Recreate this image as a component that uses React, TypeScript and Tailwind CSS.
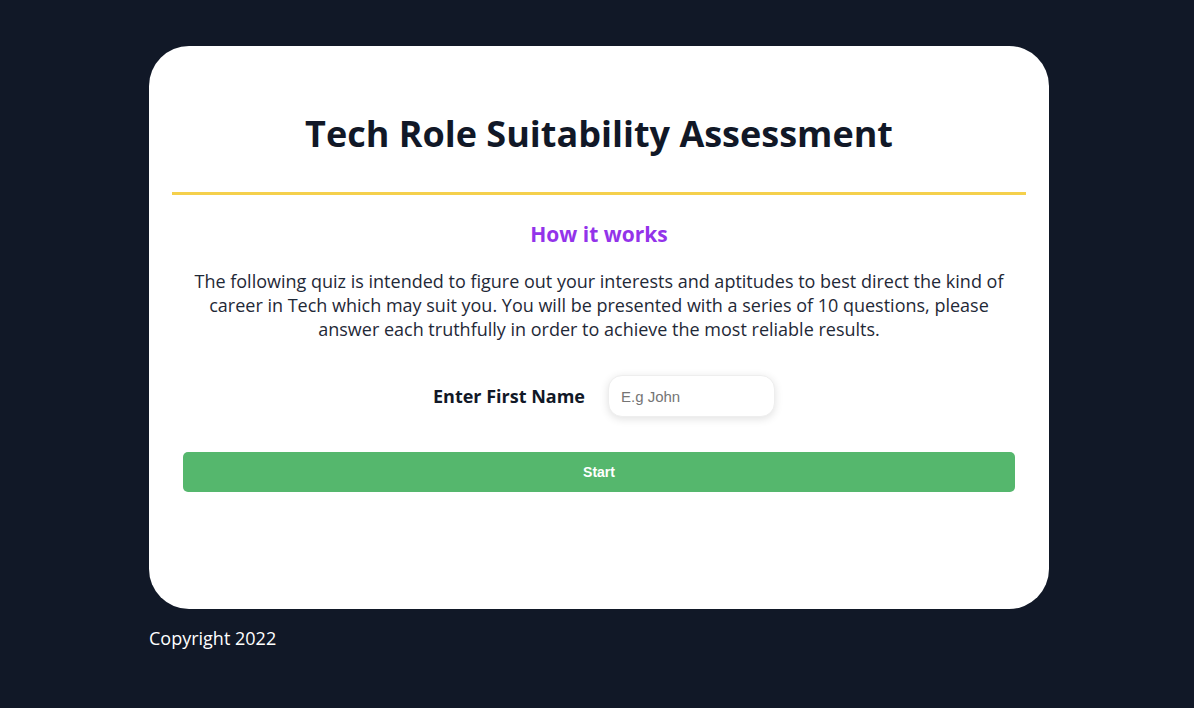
export default function App() {
  return (
    <div className="min-h-[708px] bg-[#111827] font-['Open_Sans',sans-serif]">
      <div className="ml-[149px] w-[900px] pt-[46px]">
        <div className="rounded-[40px] bg-white px-[23px] pt-[68px] pb-[117px]">
          <h1 className="text-center text-[36px] font-bold leading-[40px] text-[#111827]">
            Tech Role Suitability Assessment
          </h1>
          <hr className="mt-[38px] border-0 border-t-[3px] border-[#f5d04c]" />
          <h2 className="mt-[25px] text-center text-[21px] font-bold leading-[28px] text-[#9333ea]">
            How it works
          </h2>
          <p className="mt-[21px] px-[10px] text-center text-[18px] leading-[24px] text-[#1f2937]">
            The following quiz is intended to figure out your interests and aptitudes to best direct the kind of
            career in Tech which may suit you. You will be presented with a series of 10 questions, please
            answer each truthfully in order to achieve the most reliable results.
          </p>
          <div className="mt-[34px] flex items-center justify-center gap-[23px] pl-[10px]">
            <label className="text-[18px] font-bold text-[#111827]">Enter First Name</label>
            <input
              type="text"
              placeholder="E.g John"
              className="h-[42px] w-[167px] rounded-[14px] border border-[#eeeeee] bg-white px-3 font-['Liberation_Sans',Arial,sans-serif] text-[15px] text-[#111827] shadow-[0_2px_8px_rgba(0,0,0,0.12)] outline-none placeholder:text-[#757575]"
            />
          </div>
          <div className="mt-[35px] px-[11px]">
            <button className="h-[40px] w-full rounded-[5px] bg-[#55b76d] font-['Liberation_Sans',Arial,sans-serif] text-[14px] font-bold text-white">
              Start
            </button>
          </div>
        </div>
        <footer className="mt-[17px] text-[18px] leading-[24px] text-white">Copyright 2022</footer>
      </div>
    </div>
  );
}
